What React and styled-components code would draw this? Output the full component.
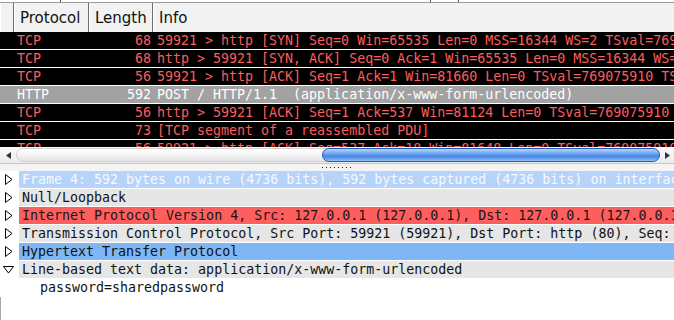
import React from "react";
import styled, { createGlobalStyle } from "styled-components";

const GlobalStyle = createGlobalStyle`
  html, body {
    margin: 0;
    background: #fff;
    overflow: hidden;
  }
`;

const packets = [
  { proto: "TCP", len: 68, info: "59921 > http [SYN] Seq=0 Win=65535 Len=0 MSS=16344 WS=2 TSval=769075910 TSecr=0 SACK_PERM=1" },
  { proto: "TCP", len: 68, info: "http > 59921 [SYN, ACK] Seq=0 Ack=1 Win=65535 Len=0 MSS=16344 WS=2 TSval=769075910" },
  { proto: "TCP", len: 56, info: "59921 > http [ACK] Seq=1 Ack=1 Win=81660 Len=0 TSval=769075910 TSecr=769075910" },
  { proto: "HTTP", len: 592, info: "POST / HTTP/1.1  (application/x-www-form-urlencoded)", http: true },
  { proto: "TCP", len: 56, info: "http > 59921 [ACK] Seq=1 Ack=537 Win=81124 Len=0 TSval=769075910 TSecr=769075910" },
  { proto: "TCP", len: 73, info: "[TCP segment of a reassembled PDU]" },
  { proto: "TCP", len: 56, info: "59921 > http [ACK] Seq=537 Ack=18 Win=81648 Len=0 TSval=769075910 TSecr=769075910" },
];

const details = [
  { text: "Frame 4: 592 bytes on wire (4736 bits), 592 bytes captured (4736 bits) on interface 0", bg: "#b6d3f9", fg: "#f6f9ff", icon: "closed" },
  { text: "Null/Loopback", bg: "#e6e6e6", fg: "#111", icon: "closed" },
  { text: "Internet Protocol Version 4, Src: 127.0.0.1 (127.0.0.1), Dst: 127.0.0.1 (127.0.0.1)", bg: "#ff5e5e", fg: "#161616", icon: "closed" },
  { text: "Transmission Control Protocol, Src Port: 59921 (59921), Dst Port: http (80), Seq: 1, Ack: 1, Len: 536", bg: "#e6e6e6", fg: "#111", icon: "closed" },
  { text: "Hypertext Transfer Protocol", bg: "#7eb6f6", fg: "#111", icon: "closed" },
  { text: "Line-based text data: application/x-www-form-urlencoded", bg: "#e6e6e6", fg: "#111", icon: "open" },
  { text: "password=sharedpassword", bg: "transparent", fg: "#111", indent: 18 },
];

const Window = styled.div`
  width: 674px;
  height: 320px;
  display: flex;
  flex-direction: column;
  background: #fff;
  overflow: hidden;
`;

const TopStrip = styled.div`
  height: 3px;
  flex: 0 0 3px;
  box-sizing: border-box;
  border-bottom: 1px solid #9a9a9a;
  display: flex;
`;

const Tick = styled.div`
  width: 1px;
  height: 2px;
  margin-left: ${(p) => p.$left}px;
  background: #444;
`;

const TopBox = styled.div`
  width: 27px;
  height: 2px;
  margin-left: 369px;
  border-left: 1px solid #555;
  border-right: 1px solid #555;
`;

const Header = styled.div`
  height: 29px;
  flex: 0 0 29px;
  display: flex;
  background: #f2f2f2;
  font-family: "DejaVu Sans", sans-serif;
  font-size: 15px;
  color: #111;
`;

const HeaderCell = styled.div`
  box-sizing: border-box;
  width: ${(p) => (p.$width ? `${p.$width}px` : "auto")};
  flex: ${(p) => (p.$width ? "0 0 auto" : "1")};
  padding: 4px 0 0 6px;
  border-right: ${(p) => (p.$width ? "1px solid #6c6c6c" : "none")};
  box-shadow: inset 1px 0 #ffffff;
  line-height: 22px;
`;

const PacketList = styled.div`
  height: 115px;
  flex: 0 0 115px;
  overflow: hidden;
  background: #fff;
`;

const PacketRow = styled.div`
  display: flex;
  height: 17px;
  border-bottom: 1px solid #fff;
  background: ${(p) => (p.$http ? "#a2a2a2" : "#000")};
  color: ${(p) => (p.$http ? "#fff" : "#ff5c5c")};
  font-family: "DejaVu Sans Mono", monospace;
  font-size: 13.3px;
  line-height: 17px;
  white-space: pre;
`;

const Cell = styled.div`
  box-sizing: border-box;
  width: ${(p) => p.$width}px;
  flex: 0 0 auto;
  text-align: ${(p) => p.$align || "left"};
  padding: 0 ${(p) => p.$pr || 0}px 0 ${(p) => p.$pl || 0}px;
  overflow: hidden;
`;

const InfoCell = styled.div`
  flex: 1;
  padding-left: 4px;
  overflow: hidden;
`;

const HScroll = styled.div`
  height: 16px;
  flex: 0 0 16px;
  display: flex;
  align-items: center;
  background: linear-gradient(#fafafa, #ececec);
`;

const Arrow = styled.div`
  width: ${(p) => p.$width}px;
  flex: 0 0 auto;
  display: flex;
  justify-content: center;
  align-items: center;
`;

const Track = styled.div`
  flex: 1;
  height: 14px;
  box-sizing: border-box;
  border: 1px solid #d2d2d2;
  border-radius: 7px;
  background: linear-gradient(#ffffff, #f3f3f3 50%, #e2e2e2);
  display: flex;
  justify-content: flex-end;
`;

const Thumb = styled.div`
  width: 338px;
  height: 14px;
  margin: -1px -1px 0 0;
  box-sizing: border-box;
  border: 1px solid #1d5bc4;
  border-radius: 7px;
  background: linear-gradient(#b7d5fa, #76abf0 35%, #4686e4 60%, #6ea6ee 85%, #9cc5f6);
`;

const PaneHandle = styled.div`
  height: 8px;
  flex: 0 0 8px;
  box-sizing: border-box;
  border-top: 1px solid #c6c6c6;
  background: #f4f4f4;
  display: flex;
  justify-content: center;
  align-items: center;
  gap: 3px;
  padding-right: 2px;
`;

const Grip = styled.div`
  width: 1px;
  height: 1px;
  background: #222;
`;

const DetailTree = styled.div`
  flex: 1;
  display: flex;
  flex-direction: column;
  font-family: "DejaVu Sans Mono", monospace;
  font-size: 13.3px;
`;

const DetailRow = styled.div`
  display: flex;
  height: 17px;
  flex: 0 0 17px;
  margin-bottom: 1px;
`;

const Expander = styled.div`
  width: 19px;
  flex: 0 0 19px;
  display: flex;
  align-items: center;
  padding-left: ${(p) => (p.$open ? 3 : 5)}px;
  box-sizing: border-box;
`;

const DetailLabel = styled.div`
  flex: 1;
  background: ${(p) => p.$bg};
  color: ${(p) => p.$fg};
  padding-left: ${(p) => 3 + (p.$indent || 0)}px;
  line-height: 17px;
  white-space: pre;
  overflow: hidden;
`;

const Filler = styled.div`
  flex: 1;
  border-left: 1px solid #a8a8a8;
`;

const TreeIcon = ({ type }) => {
  if (type === "open") {
    return (
      <svg width="11" height="8" viewBox="0 0 11 8">
        <polygon points="0.5,0.5 10.5,0.5 5.5,7" fill="#fff" stroke="#000" strokeWidth="1" />
      </svg>
    );
  }
  if (type === "closed") {
    return (
      <svg width="8" height="11" viewBox="0 0 8 11">
        <polygon points="0.5,0.5 7,5.5 0.5,10.5" fill="#fff" stroke="#000" strokeWidth="1" />
      </svg>
    );
  }
  return null;
};

export default function App() {
  return (
    <Window>
      <GlobalStyle />
      <TopStrip>
        <Tick $left={60} />
        <TopBox />
      </TopStrip>
      <Header>
        <HeaderCell $width={14} />
        <HeaderCell $width={75}>Protocol</HeaderCell>
        <HeaderCell $width={64}>Length</HeaderCell>
        <HeaderCell>Info</HeaderCell>
      </Header>
      <PacketList>
        {packets.map((p, i) => (
          <PacketRow key={i} $http={p.http}>
            <Cell $width={14} />
            <Cell $width={75} $pl={3}>{p.proto}</Cell>
            <Cell $width={64} $align="right" $pr={2}>{p.len}</Cell>
            <InfoCell>{p.info}</InfoCell>
          </PacketRow>
        ))}
      </PacketList>
      <HScroll>
        <Arrow $width={16}>
          <svg width="5" height="7" viewBox="0 0 5 7">
            <polygon points="5,0 0,3.5 5,7" fill="#333" />
          </svg>
        </Arrow>
        <Track>
          <Thumb />
        </Track>
        <Arrow $width={14}>
          <svg width="5" height="7" viewBox="0 0 5 7">
            <polygon points="0,0 5,3.5 0,7" fill="#333" />
          </svg>
        </Arrow>
      </HScroll>
      <PaneHandle>
        {Array.from({ length: 8 }).map((_, i) => (
          <Grip key={i} />
        ))}
      </PaneHandle>
      <DetailTree>
        {details.map((d, i) => (
          <DetailRow key={i}>
            <Expander $open={d.icon === "open"}>
              <TreeIcon type={d.icon} />
            </Expander>
            <DetailLabel $bg={d.bg} $fg={d.fg} $indent={d.indent}>
              {d.text}
            </DetailLabel>
          </DetailRow>
        ))}
        <Filler />
      </DetailTree>
    </Window>
  );
}
